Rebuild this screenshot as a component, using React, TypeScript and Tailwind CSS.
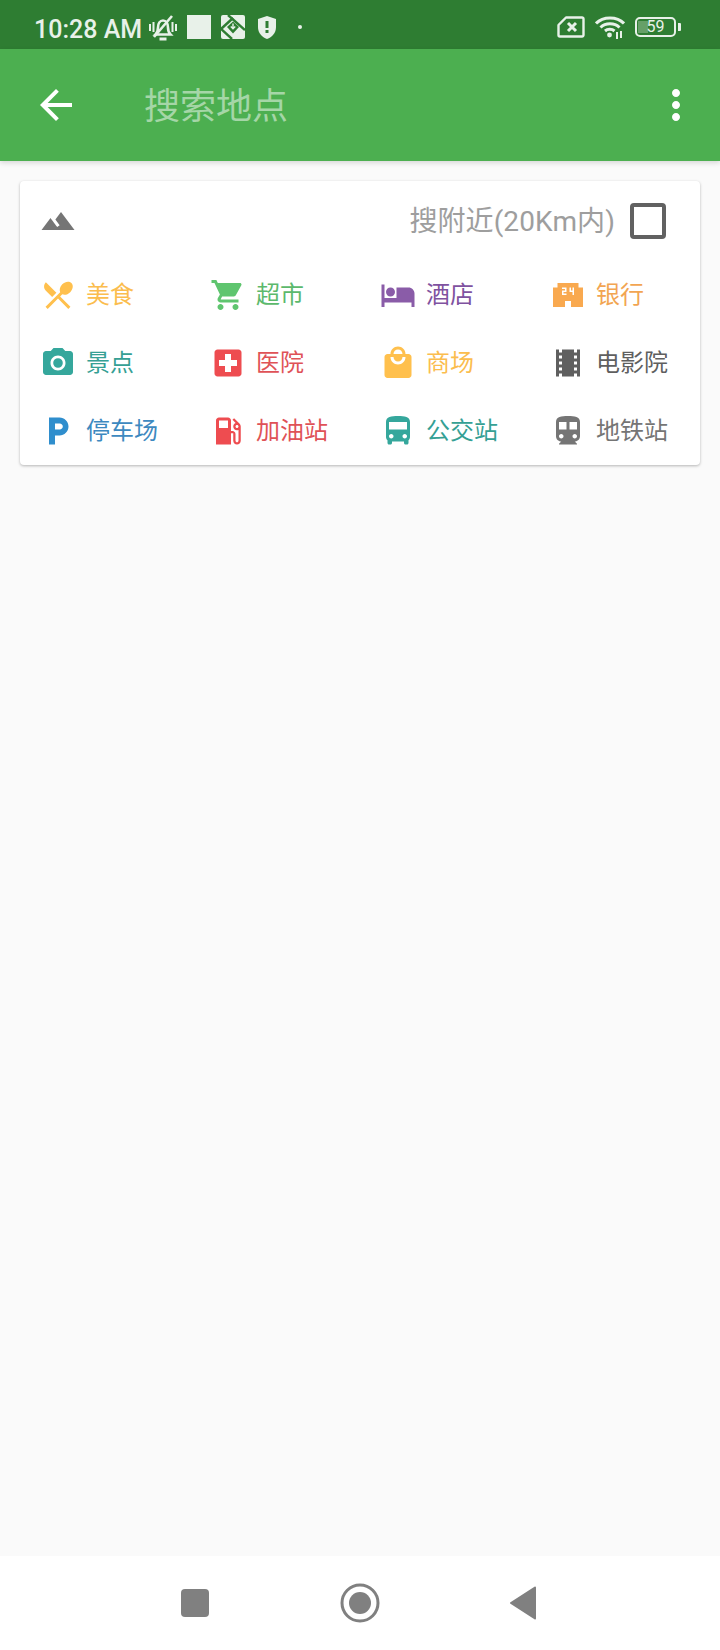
import React from "react";

const P: Record<string, string> = {
  dining: "M8.1 13.34l2.83-2.83L3.91 3.5c-1.56 1.56-1.56 4.09 0 5.66l4.19 4.18zm6.78-1.81c1.53.71 3.68.21 5.27-1.38 1.91-1.91 2.28-4.65.81-6.12-1.46-1.46-4.2-1.1-6.12.81-1.59 1.59-2.09 3.74-1.38 5.27L3.7 19.87l1.41 1.41L12 14.41l6.88 6.88 1.41-1.41L13.41 13l1.47-1.47z",
  cart: "M7 18c-1.1 0-1.99.9-1.99 2S5.9 22 7 22s2-.9 2-2-.9-2-2-2zM1 2v2h2l3.6 7.59-1.35 2.45c-.16.28-.25.61-.25.96 0 1.1.9 2 2 2h12v-2H7.42c-.14 0-.25-.11-.25-.25l.03-.12.9-1.63h7.45c.75 0 1.41-.41 1.75-1.03l3.58-6.49c.08-.14.12-.31.12-.48 0-.55-.45-1-1-1H5.21l-.94-2H1zm16 16c-1.1 0-1.99.9-1.99 2s.89 2 1.99 2 2-.9 2-2-.9-2-2-2z",
  hotel: "M7 13c1.66 0 3-1.34 3-3S8.66 7 7 7s-3 1.34-3 3 1.34 3 3 3zm12-6h-8v7H3V5H1v15h2v-3h18v3h2v-9c0-2.21-1.79-4-4-4z",
  bank: "M19 7V4H5v3H2v13h8v-4h4v4h8V7h-3zm-8 3H9v1h2v1H8V9h2V8H8V7h3v3zm5 2h-1v-2h-2V7h1v2h1V7h1v5z",
  camera: "M9 2L7.17 4H4c-1.1 0-2 .9-2 2v12c0 1.1.9 2 2 2h16c1.1 0 2-.9 2-2V6c0-1.1-.9-2-2-2h-3.17L15 2H9zm3 15c-2.76 0-5-2.24-5-5s2.24-5 5-5 5 2.24 5 5-2.24 5-5 5zm0-8.2a3.2 3.2 0 1 0 0 6.4 3.2 3.2 0 0 0 0-6.4z",
  hospital: "M19 3H5c-1.1 0-1.99.9-1.99 2L3 19c0 1.1.9 2 2 2h14c1.1 0 2-.9 2-2V5c0-1.1-.9-2-2-2zm-1 11h-4v4h-4v-4H6v-4h4V6h4v4h4v4z",
  mall: "M19 6h-2c0-2.76-2.24-5-5-5S7 3.24 7 6H5c-1.1 0-1.99.9-1.99 2L3 20c0 1.1.9 2 2 2h14c1.1 0 2-.9 2-2V8c0-1.1-.9-2-2-2zm-7-3c1.66 0 3 1.34 3 3H9c0-1.66 1.34-3 3-3zm0 10c-2.76 0-5-2.24-5-5h2c0 1.66 1.34 3 3 3s3-1.34 3-3h2c0 2.76-2.24 5-5 5z",
  movie: "M18 3v2h-2V3H8v2H6V3H4v18h2v-2h2v2h8v-2h2v2h2V3h-2zM8 17H6v-2h2v2zm0-4H6v-2h2v2zm0-4H6V7h2v2zm10 8h-2v-2h2v2zm0-4h-2v-2h2v2zm0-4h-2V7h2v2z",
  parking: "M13 3H6v18h4v-6h3c3.31 0 6-2.69 6-6s-2.69-6-6-6zm.2 8H10V7h3.2c1.1 0 2 .9 2 2s-.9 2-2 2z",
  gas: "M19.77 7.23l.01-.01-3.72-3.72L15 4.56l2.11 2.11c-.94.36-1.61 1.26-1.61 2.33 0 1.38 1.12 2.5 2.5 2.5.36 0 .69-.08 1-.21v7.21c0 .55-.45 1-1 1s-1-.45-1-1V14c0-1.1-.9-2-2-2h-1V5c0-1.1-.9-2-2-2H6c-1.1 0-2 .9-2 2v16h10v-7.5h1.5v5c0 1.38 1.12 2.5 2.5 2.5s2.5-1.12 2.5-2.5V9c0-.69-.28-1.32-.73-1.77zM12 10H6V5h6v5zm6 0c-.55 0-1-.45-1-1s.45-1 1-1 1 .45 1 1-.45 1-1 1z",
  bus: "M4 16c0 .88.39 1.67 1 2.22V20c0 .55.45 1 1 1h1c.55 0 1-.45 1-1v-1h8v1c0 .55.45 1 1 1h1c.55 0 1-.45 1-1v-1.78c.61-.55 1-1.34 1-2.22V6c0-3.5-3.58-4-8-4s-8 .5-8 4v10zm3.5 1c-.83 0-1.5-.67-1.5-1.5S6.67 14 7.5 14s1.5.67 1.5 1.5S8.33 17 7.5 17zm9 0c-.83 0-1.5-.67-1.5-1.5s.67-1.5 1.5-1.5 1.5.67 1.5 1.5-.67 1.5-1.5 1.5zm1.5-6H6V6h12v5z",
  subway: "M12 2c-4.42 0-8 .5-8 4v9.5C4 17.43 5.57 19 7.5 19L6 20.5v.5h12v-.5L16.5 19c1.93 0 3.5-1.57 3.5-3.5V6c0-3.5-3.58-4-8-4zM7.5 17c-.83 0-1.5-.67-1.5-1.5S6.67 14 7.5 14s1.5.67 1.5 1.5S8.33 17 7.5 17zm3.5-6H6V6h5v5zm5.5 6c-.83 0-1.5-.67-1.5-1.5s.67-1.5 1.5-1.5 1.5.67 1.5 1.5-.67 1.5-1.5 1.5zm1.5-6h-5V6h5v5z",
  terrain: "M14 6l-3.75 5 2.85 3.8-1.6 1.2C9.81 13.75 7 10 7 10l-6 8h22L14 6z",
};

function Icon({ d, color, size = 36 }: { d: string; color: string; size?: number }) {
  return (
    <svg width={size} height={size} viewBox="0 0 24 24" fill={color} fillRule="evenodd" className="shrink-0 block">
      <path d={d} />
    </svg>
  );
}

const items = [
  { icon: "dining", label: "美食", icolor: "#ffc04d", tcolor: "#fbbd4e" },
  { icon: "cart", label: "超市", icolor: "#5fc56f", tcolor: "#5cb96c" },
  { icon: "hotel", label: "酒店", icolor: "#8a5ca8", tcolor: "#7f52a0" },
  { icon: "bank", label: "银行", icolor: "#f9a94f", tcolor: "#f2a552" },
  { icon: "camera", label: "景点", icolor: "#35a79c", tcolor: "#35a094" },
  { icon: "hospital", label: "医院", icolor: "#ee4c50", tcolor: "#df5257" },
  { icon: "mall", label: "商场", icolor: "#ffc04d", tcolor: "#fbbd4e" },
  { icon: "movie", label: "电影院", icolor: "#5f5f5f", tcolor: "#5f5f5f" },
  { icon: "parking", label: "停车场", icolor: "#2f8ecd", tcolor: "#3d89c0" },
  { icon: "gas", label: "加油站", icolor: "#ee4c50", tcolor: "#df5257" },
  { icon: "bus", label: "公交站", icolor: "#35a79c", tcolor: "#35a094" },
  { icon: "subway", label: "地铁站", icolor: "#757575", tcolor: "#757575" },
];

const SB = "#e8f1e9";
const DK = "#2e7d32";

function StatusIcons() {
  return (
    <>
      <svg width="30" height="27" viewBox="0 0 30 27" fill="none" stroke={SB} strokeWidth="2.6" className="ml-[6px] shrink-0">
        <path d="M7.5 20.5c2-2 2.5-4 2.5-7 0-4 2-7 5-7s5 3 5 7c0 3 .5 5 2.5 7z" />
        <path d="M11.5 25h7" strokeWidth="3" />
        <path d="M6 23L24 2" />
        <path d="M2 10v7M5.5 8v10M24.5 8v10M28 10v7" strokeWidth="2" />
      </svg>
      <div className="ml-[9px] w-[24px] h-[24px] bg-[#e8f1e9] shrink-0" />
      <svg width="24" height="24" viewBox="0 0 24 24" className="ml-[10px] shrink-0">
        <rect width="24" height="24" rx="2" fill={SB} />
        <path d="M7 0L24 15" stroke={DK} strokeWidth="2.4" fill="none" />
        <path d="M0 14L11 24" stroke={DK} strokeWidth="2.4" fill="none" />
        <path d="M0 14L12 3" stroke={DK} strokeWidth="2.4" fill="none" />
        <path d="M12 6.5L18 12l-6 6.5L6 12z" fill={DK} />
        <path d="M12 8.5v5M9.8 11.5l2.2 2.3 2.2-2.3" stroke={SB} strokeWidth="1.4" fill="none" />
      </svg>
      <svg width="20" height="23" viewBox="0 0 20 23" className="ml-[12px] shrink-0">
        <path fill={SB} d="M10 0l9 3v8c0 6-4 10-9 12-5-2-9-6-9-12V3z" />
        <rect x="8.5" y="5" width="3" height="7" fill={DK} />
        <rect x="8.5" y="14" width="3" height="3" fill={DK} />
      </svg>
      <div className="ml-[21px] w-[4px] h-[4px] rounded-full bg-[#e8f1e9] shrink-0" />
    </>
  );
}

export default function App() {
  return (
    <div className="w-[720px] h-[1650px] flex flex-col bg-[#fafafa] overflow-hidden font-['Roboto','Noto_Sans_CJK_SC',sans-serif]">
      <div className="h-[49px] bg-[#2e7d32] flex items-center pt-[5px] pl-[34px] pr-[39px] shrink-0">
        <span className="text-[25px] leading-none font-medium text-[#e8f1e9] pt-[4px]">10:28 AM</span>
        <StatusIcons />
        <div className="flex-1" />
        <svg width="28" height="22" viewBox="0 0 28 22" fill="none" stroke={SB} className="shrink-0">
          <path d="M9 1.5h16a1.5 1.5 0 0 1 1.5 1.5v16a1.5 1.5 0 0 1-1.5 1.5H3A1.5 1.5 0 0 1 1.5 19V9z" strokeWidth="2.4" strokeLinejoin="round" />
          <path d="M11 7l8 8M19 7l-8 8" strokeWidth="3" />
        </svg>
        <svg width="30" height="24" viewBox="0 0 30 24" fill="none" stroke={SB} strokeWidth="3" className="ml-[10px] shrink-0">
          <path d="M1 8.5C8 1 22 1 29 8.5" />
          <path d="M5.5 12.5c5-5 14-5 19 0" />
          <path d="M10 16c2.5-2.2 7-2.2 9.5 0" />
          <circle cx="14.5" cy="20" r="2.4" fill={SB} stroke="none" />
          <path d="M22 17v7M26 16v7" strokeWidth="2" />
        </svg>
        <div className="ml-[10px] relative w-[41px] h-[20px] rounded-[5px] border-2 border-[#e8f1e9] shrink-0 flex items-center justify-center overflow-hidden">
          <div className="absolute left-[1px] top-[2px] bottom-[2px] w-[10px] bg-[#e8f1e9] opacity-30" />
          <span className="relative text-[16px] leading-none text-[#e8f1e9]">59</span>
        </div>
        <div className="ml-[2px] w-[3px] h-[8px] bg-[#e8f1e9] rounded-r-[1px] shrink-0" />
      </div>

      <div className="h-[112px] bg-[#4caf50] flex items-center shrink-0 relative shadow-[0_2px_5px_rgba(0,0,0,0.14)]">
        <div className="ml-[32px] shrink-0">
          <Icon d="M20 11H7.83l5.59-5.59L12 4l-8 8 8 8 1.41-1.41L7.83 13H20v-2z" color="#ffffff" size={48} />
        </div>
        <span className="ml-[64px] pt-[3px] text-[36px] leading-none text-[#a5d6a7]">搜索地点</span>
        <div className="flex-1" />
        <div className="mr-[20px] shrink-0">
          <Icon d="M12 8c1.1 0 2-.9 2-2s-.9-2-2-2-2 .9-2 2 .9 2 2 2zm0 2c-1.1 0-2 .9-2 2s.9 2 2 2 2-.9 2-2-.9-2-2-2zm0 6c-1.1 0-2 .9-2 2s.9 2 2 2 2-.9 2-2-.9-2-2-2z" color="#ffffff" size={48} />
        </div>
      </div>

      <div className="flex-1 px-[20px] pt-[20px]">
        <div className="bg-white rounded-[4px] shadow-[0_1px_3px_rgba(0,0,0,0.28)]">
          <div className="h-[80px] flex items-center pl-[20px] pr-[34px]">
            <Icon d={P.terrain} color="#757575" />
            <div className="flex-1" />
            <span className="text-[28px] leading-none tracking-[0.1px] pt-[1px] text-[#9e9e9e]">搜附近(20Km内)</span>
            <div className="ml-[15px] w-[36px] h-[36px] rounded-[4px] border-[4px] border-[#616161] shrink-0" />
          </div>
          <div className="grid grid-cols-4">
            {items.map((it) => (
              <div key={it.label} className="h-[68px] flex items-center pl-[20px]">
                <Icon d={P[it.icon]} color={it.icolor} />
                <span className="ml-[10px] text-[24px] leading-none" style={{ color: it.tcolor }}>{it.label}</span>
              </div>
            ))}
          </div>
        </div>
      </div>

      <div className="h-[94px] bg-white flex items-center pl-[181px] shrink-0">
        <div className="w-[28px] h-[28px] rounded-[4px] bg-[#808080] shrink-0" />
        <svg width="40" height="40" viewBox="0 0 40 40" className="ml-[131px] shrink-0">
          <circle cx="20" cy="20" r="18" fill="none" stroke="#808080" strokeWidth="3" />
          <circle cx="20" cy="20" r="11" fill="#808080" />
        </svg>
        <svg width="28" height="36" viewBox="0 0 28 36" className="ml-[129px] shrink-0">
          <path d="M26 2.5L2 18l24 15.5z" fill="#808080" stroke="#808080" strokeWidth="2" strokeLinejoin="round" />
        </svg>
      </div>
    </div>
  );
}
